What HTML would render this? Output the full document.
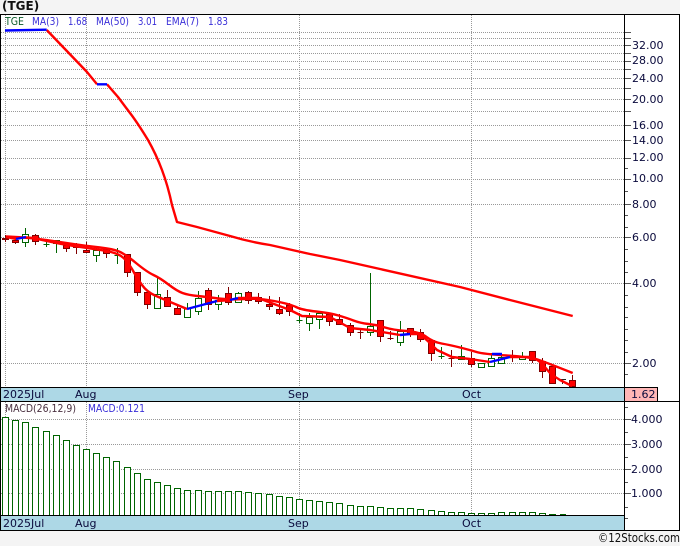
<!DOCTYPE html>
<html><head><meta charset="utf-8"><style>
html,body{margin:0;padding:0;background:#f4f4f4}
svg{display:block}
text{font-family:"DejaVu Sans",sans-serif;font-size:11px;fill:#0a0a3c}
.l{font-size:10.5px}
</style></head><body>
<svg width="680" height="546" viewBox="0 0 680 546" xmlns="http://www.w3.org/2000/svg">
<rect width="680" height="546" fill="#f4f4f4"/>
<rect x="0" y="14" width="680" height="517" fill="#fff"/>
<text x="2" y="10" style="font-size:12px;font-weight:bold;fill:#111">(TGE)</text>
<g shape-rendering="crispEdges">
<path stroke="#999" stroke-dasharray="1 1" fill="none" d="M1 32.5H624M1 38.5H624M1 45.5H624M1 53.5H624M1 61.5H624M1 69.5H624M1 78.5H624M1 88.5H624M1 99.5H624M1 111.5H624M1 125.5H624M1 140.5H624M1 158.5H624M1 179.5H624M1 204.5H624M1 237.5H624M1 283.5H624M1 363.5H624M1 419.5H624M1 444.5H624M1 469.5H624M1 493.5H624M86.5 15V387M299.5 15V387M471.5 15V387M5.5 15V387M86.5 402V515M299.5 402V515M471.5 402V515M5.5 402V515"/>
<path stroke="#006400" fill="none" d="M25.5 228V247M46.5 241V247M56.5 240V253M96.5 248V262M117.5 248V264M157.5 278V308M187.5 303V317M198.5 291V315M218.5 295V310M238.5 292V303M299.5 313V323M309.5 313V331M319.5 312V329M370.5 273V336M400.5 321V346M441.5 347V359M461.5 345V360M481.5 363V367M491.5 353V366M501.5 355V363M522.5 352V360"/>
<path stroke="#800000" fill="none" d="M5.5 235V242M15.5 239V244M35.5 234V245M66.5 243V252M76.5 243V254M86.5 242V253M106.5 248V258M127.5 254V277M137.5 272V296M147.5 292V309M167.5 290V307M177.5 305V315M208.5 288V310M228.5 287V305M248.5 291V304M258.5 293V304M269.5 296V310M279.5 297V315M289.5 303V316M329.5 313V326M339.5 314V325M350.5 323V336M360.5 328V339M380.5 320V342M390.5 331V340M410.5 328V337M420.5 329V342M431.5 340V361M451.5 350V367M471.5 352V367M512.5 350V362M532.5 351V363M542.5 358V378M552.5 366V383M572.5 375V387"/>
<path stroke="#222" fill="none" d="M562.5 379V384M559 379.5H566"/>
<path stroke="#006400" fill="#fff" d="M22.5 234.5h6v8h-6zM43.5 244.5h6v0h-6zM53.5 240.5h6v3h-6zM93.5 250.5h6v5h-6zM114.5 255.5h6v0h-6zM154.5 294.5h6v14h-6zM184.5 308.5h6v9h-6zM195.5 298.5h6v13h-6zM215.5 300.5h6v4h-6zM235.5 293.5h6v9h-6zM296.5 320.5h6v0h-6zM306.5 317.5h6v6h-6zM316.5 313.5h6v6h-6zM367.5 326.5h6v6h-6zM397.5 331.5h6v11h-6zM438.5 356.5h6v0h-6zM458.5 356.5h6v3h-6zM478.5 363.5h6v4h-6zM488.5 358.5h6v8h-6zM498.5 357.5h6v6h-6zM519.5 357.5h6v2h-6z"/>
<path stroke="#800000" fill="#f00" d="M2.5 238.5h6v1h-6zM12.5 240.5h6v2h-6zM32.5 235.5h6v6h-6zM63.5 245.5h6v3h-6zM73.5 246.5h6v1h-6zM83.5 250.5h6v2h-6zM103.5 249.5h6v4h-6zM124.5 254.5h6v18h-6zM134.5 272.5h6v20h-6zM144.5 292.5h6v12h-6zM164.5 297.5h6v9h-6zM174.5 308.5h6v6h-6zM205.5 290.5h6v14h-6zM225.5 293.5h6v9h-6zM245.5 292.5h6v8h-6zM255.5 297.5h6v4h-6zM266.5 304.5h6v2h-6zM276.5 309.5h6v4h-6zM286.5 305.5h6v6h-6zM326.5 314.5h6v7h-6zM336.5 319.5h6v5h-6zM347.5 325.5h6v7h-6zM357.5 332.5h6v0h-6zM377.5 320.5h6v16h-6zM387.5 338.5h6v0h-6zM407.5 328.5h6v5h-6zM417.5 332.5h6v7h-6zM428.5 340.5h6v13h-6zM448.5 358.5h6v0h-6zM468.5 358.5h6v6h-6zM509.5 356.5h6v0h-6zM529.5 351.5h6v9h-6zM539.5 361.5h6v10h-6zM549.5 366.5h6v17h-6zM569.5 380.5h6v6h-6z"/>
</g>
<g fill="none" stroke="#f00" stroke-width="2.4" stroke-linejoin="round">
<path d="M46.7 30L63 47L87 72L97 84.3M107 84.3L118 97L130 113Q137 122 148 140Q156 154 162 170Q168 186 172 205L177 222L197 227L230 236Q250 242 270 245L310 254L340 260L460 287L510 300L572.7 316"/>
<path d="M6 236.5L19.5 237.25Q33 238 46.5 240Q60 242 73.5 244Q87 246 100 247.5Q113 249 119 251.5Q125 254 136 263Q147 272 153.5 275Q160 278 168.5 284.5Q177 291 182.5 293Q188 295 197.5 296Q207 297 218.5 298.5Q230 300 244 299Q258 298 274 301Q290 304 296 307Q302 310 316 311.5Q330 313 338.5 315.5Q347 318 353.5 320.5Q360 323 368.5 324Q377 325 385 327.5Q393 330 406.5 331Q420 332 426.5 337Q433 342 441.5 343.5Q450 345 460 347.5Q470 350 476.5 352Q483 354 506.5 355.5Q530 357 537.5 359.5Q545 362 572.7 373"/>
<path d="M6 237L16 239M26 237.5L33 238L46.5 241Q60 244 73.5 246Q87 248 101 250Q115 252 121 256Q127 260 132 269Q137 278 142 285Q147 292 155 295.5Q163 299 175 304L187 309M217 301L230 300M238 298L258 298Q274 304 290 310Q296 313 302 316Q316 316.5 330 317Q340 322.5 350 328Q360 329 370 330Q385 332.5 400 335M410 334L420 334Q428 341 437 350Q444.5 353.5 452 357Q461 358 470 359Q480 360.5 490 362M510 357L530 357Q535 358 540 362Q545 367 550 373Q555 377 560 380L572 386"/>
</g>
<g fill="none" stroke="#00f" stroke-width="2.4">
<path d="M5 30.5L46.7 29.7M97 84.3H107M16 239L26 237M187 309L217 301M230 300L238 298M400 335L410 334M490 362L510 357M492 354H502"/>
</g>
<g shape-rendering="crispEdges">
<rect x="1" y="388" width="623" height="13" fill="#add8e6"/>
<rect x="1" y="516" width="623" height="14" fill="#add8e6"/>
<rect x="625" y="388" width="32" height="13" fill="#ffb6b6"/>
<path stroke="#006400" fill="#fff" d="M2.5 417.5h6v98h-6zM12.5 420.5h6v95h-6zM22.5 422.5h6v93h-6zM32.5 427.5h6v88h-6zM43.5 431.5h6v84h-6zM53.5 435.5h6v80h-6zM63.5 440.5h6v75h-6zM73.5 445.5h6v70h-6zM83.5 449.5h6v66h-6zM93.5 453.5h6v62h-6zM103.5 457.5h6v58h-6zM113.5 461.5h6v54h-6zM124.5 467.5h6v48h-6zM134.5 473.5h6v42h-6zM144.5 479.5h6v36h-6zM154.5 482.5h6v33h-6zM164.5 485.5h6v30h-6zM174.5 488.5h6v27h-6zM184.5 490.5h6v25h-6zM195.5 490.5h6v25h-6zM205.5 491.5h6v24h-6zM215.5 491.5h6v24h-6zM225.5 491.5h6v24h-6zM235.5 491.5h6v24h-6zM245.5 492.5h6v23h-6zM255.5 493.5h6v22h-6zM266.5 494.5h6v21h-6zM276.5 496.5h6v19h-6zM286.5 497.5h6v18h-6zM296.5 499.5h6v16h-6zM306.5 500.5h6v15h-6zM316.5 501.5h6v14h-6zM326.5 502.5h6v13h-6zM336.5 503.5h6v12h-6zM347.5 505.5h6v10h-6zM357.5 506.5h6v9h-6zM367.5 506.5h6v9h-6zM377.5 507.5h6v8h-6zM387.5 508.5h6v7h-6zM397.5 508.5h6v7h-6zM407.5 508.5h6v7h-6zM417.5 509.5h6v6h-6zM428.5 510.5h6v5h-6zM438.5 511.5h6v4h-6zM448.5 512.5h6v3h-6zM458.5 512.5h6v3h-6zM468.5 513.5h6v2h-6zM478.5 513.5h6v2h-6zM488.5 513.5h6v2h-6zM498.5 512.5h6v3h-6zM509.5 512.5h6v3h-6zM519.5 512.5h6v3h-6zM529.5 512.5h6v3h-6zM539.5 513.5h6v2h-6z"/>
<path fill="#006400" d="M549 514h7v2h-7zM560 514h6v2h-6z"/>
<path stroke="#000" fill="none" d="M0 14.5H680M0.5 14V531M679.5 14V531M624.5 14V531M0 387.5H658M0 401.5H680M657.5 387V401M0 515.5H624M0 530.5H680"/>
<path stroke="#555" fill="none" d="M625 32.5h6M625 38.5h6M625 45.5h6M625 53.5h6M625 61.5h6M625 69.5h6M625 78.5h6M625 88.5h6M625 99.5h6M625 111.5h6M625 125.5h6M625 140.5h6M625 158.5h6M625 168.5h3M625 179.5h6M625 191.5h3M625 204.5h6M625 215.5h3M625 227.5h3M625 237.5h6M625 249.5h3M625 261.5h3M625 272.5h3M625 283.5h6M625 295.5h3M625 307.5h3M625 317.5h3M625 329.5h3M625 340.5h3M625 352.5h3M625 363.5h6M625 374.5h3M625 407.5h3M625 419.5h6M625 432.5h3M625 444.5h6M625 457.5h3M625 469.5h6M625 482.5h3M625 493.5h6M625 507.5h3M625 518.5h3"/>
</g>
<text class="l" x="5" y="25" textLength="19" lengthAdjust="spacingAndGlyphs" style="fill:#0a5a2a">TGE</text>
<text class="l" x="32" y="25" textLength="27" lengthAdjust="spacingAndGlyphs" style="fill:#3a2fd8">MA(3)</text>
<text class="l" x="68" y="25" textLength="19" lengthAdjust="spacingAndGlyphs" style="fill:#3a2fd8">1.68</text>
<text class="l" x="96" y="25" textLength="33" lengthAdjust="spacingAndGlyphs" style="fill:#3a2fd8">MA(50)</text>
<text class="l" x="138" y="25" textLength="19" lengthAdjust="spacingAndGlyphs" style="fill:#3a2fd8">3.01</text>
<text class="l" x="166" y="25" textLength="33" lengthAdjust="spacingAndGlyphs" style="fill:#3a2fd8">EMA(7)</text>
<text class="l" x="208" y="25" textLength="20" lengthAdjust="spacingAndGlyphs" style="fill:#3a2fd8">1.83</text>
<text class="l" x="5" y="412" textLength="71" lengthAdjust="spacingAndGlyphs" style="fill:#4a3040">MACD(26,12,9)</text>
<text class="l" x="88" y="412" textLength="57" lengthAdjust="spacingAndGlyphs" style="fill:#3a2fd8">MACD:0.121</text>
<text x="632" y="49">32.00</text>
<text x="632" y="64">28.00</text>
<text x="632" y="82">24.00</text>
<text x="632" y="103">20.00</text>
<text x="632" y="129">16.00</text>
<text x="632" y="144">14.00</text>
<text x="632" y="161">12.00</text>
<text x="632" y="182">10.00</text>
<text x="632" y="208">8.00</text>
<text x="632" y="241">6.00</text>
<text x="632" y="287">4.00</text>
<text x="632" y="367">2.00</text>
<text x="631" y="398">1.62</text>
<text x="631" y="423">4.000</text>
<text x="631" y="448">3.000</text>
<text x="631" y="473">2.000</text>
<text x="631" y="497">1.000</text>
<text x="3" y="398">2025Jul</text><text x="75" y="398">Aug</text><text x="288" y="398">Sep</text><text x="462" y="398">Oct</text>
<text x="3" y="527">2025Jul</text><text x="75" y="527">Aug</text><text x="288" y="527">Sep</text><text x="462" y="527">Oct</text>
<text x="598" y="542" textLength="82" lengthAdjust="spacingAndGlyphs" style="font-size:12px;fill:#111">©12Stocks.com</text>
</svg>
</body></html>
